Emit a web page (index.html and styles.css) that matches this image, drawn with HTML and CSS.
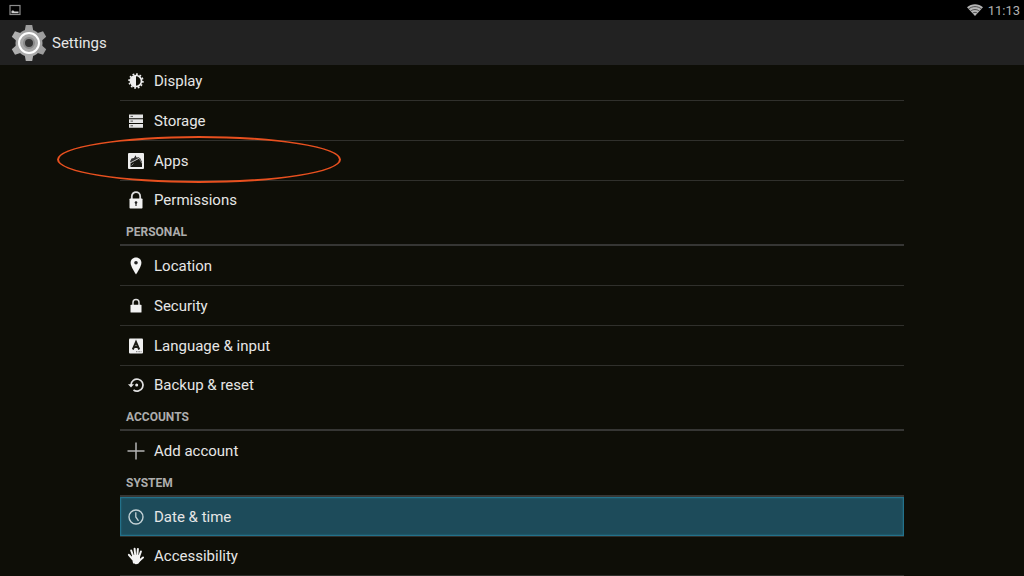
FILE: index.html
```html
<!DOCTYPE html>
<html lang="en">
<head>
    <meta charset="UTF-8">
    <meta name="viewport" content="width=device-width, initial-scale=1.0">
    <title>Settings</title>
    <link rel="stylesheet" href="styles.css">
</head>
<body>
    <div class="status-bar">
        <svg class="status-picture" viewBox="0 0 12 12">
            <rect x="1" y="1.5" width="10" height="9" fill="none" stroke="#8c8c8c" stroke-width="1.2"/>
            <path d="M2.500 9.200V7l1.500-.8 1.500 1.300h4v1.700z" fill="#ccc"/>
        </svg>
        <div class="status-right">
            <svg class="status-wifi" viewBox="0 0 16 12">
                <path d="M0 3.200C4.500-.8 11.500-.8 16 3.200L8 12z" fill="#b5b5b5"/>
                <path d="M1.500 5C5.500 1.800 10.500 1.800 14.500 5M3.500 7.200C6.200 5 9.800 5 12.500 7.200M5.500 9.300C7 8 9 8 10.500 9.300" fill="none" stroke="#222" stroke-width=".7"/>
            </svg>
            <span>11:13</span>
        </div>
    </div>

    <header class="action-bar">
        <svg class="gear" viewBox="0 0 36 36">
            <defs>
                <linearGradient id="gear-fill" x1="0" y1="0" x2="0" y2="36" gradientUnits="userSpaceOnUse">
                    <stop offset="0" stop-color="#9c9c9c"/>
                    <stop offset="1" stop-color="#b0b0b0"/>
                </linearGradient>
            </defs>
            <g fill="url(#gear-fill)">
                <circle cx="18" cy="18" r="13.500"/>
                <path d="M13.500 7l1.300-7h6.400l1.300 7v22l-1.300 7h-6.400l-1.300-7z"/>
                <path d="M13.500 7l1.300-7h6.400l1.300 7v22l-1.300 7h-6.400l-1.300-7z" transform="rotate(60 18 18)"/>
                <path d="M13.500 7l1.300-7h6.400l1.300 7v22l-1.300 7h-6.400l-1.300-7z" transform="rotate(120 18 18)"/>
            </g>
            <circle cx="18" cy="18" r="10" fill="#a8a8a8" stroke="#fff" stroke-width="2"/>
            <circle cx="18" cy="18" r="5" fill="#333" stroke="#8a8a8a" stroke-width="2"/>
        </svg>
        <h1>Settings</h1>
    </header>

    <main>
        <div class="settings">
            <ul>
                <li><a href="#display">
                    <svg viewBox="0 0 16 16">
                        <circle cx="8" cy="8" r="6.900" fill="none" stroke="#eee" stroke-width="1.600" stroke-dasharray="1.800 1.800"/>
                        <circle cx="8" cy="8" r="5.500" fill="none" stroke="#eee" stroke-width="1.700"/>
                        <path d="M8 2.500a5.500 5.500 0 0 0 0 11z" fill="#eee"/>
                    </svg>
                    Display</a></li>
                <li><a href="#storage">
                    <svg viewBox="0 0 16 16">
                        <path d="M1 1.500h14v3.800H1zM1 6.200h14V10H1zM1 10.900h14v3.800H1z" fill="#e4e4e4"/>
                        <path d="M2.500 3.400H5M2.500 8.100H5M2.500 12.800H5" stroke="#555" stroke-width="1"/>
                    </svg>
                    Storage</a></li>
                <li class="marked"><a href="#apps">
                    <svg viewBox="0 0 16 16">
                        <rect width="16" height="16" rx="1" fill="#eee"/>
                        <path d="M2.500 14V9.500L12 5l2 4v5z" fill="#191914"/>
                        <path d="M2 8.500L3.500 5.500 6 5 7.500 2.300l1 2.200 2.500-.3.500 1.300L3.500 9.800z" fill="#333"/>
                        <path d="M2 10l9.500-5" stroke="#ccc" stroke-width=".9"/>
                        <path d="M3.500 12.500l2-2M11.500 6l2.500 4.500" stroke="#aaa" stroke-width=".7"/>
                    </svg>
                    Apps</a></li>
                <li><a href="#permissions">
                    <svg viewBox="0 0 16 16">
                        <path d="M3.800 7V4.500C3.800-1.300 12.200-1.300 12.200 4.500V7" fill="none" stroke="#ddd" stroke-width="1.800"/>
                        <rect x="1.500" y="6.500" width="13" height="10" rx=".8" fill="#f2f2f2"/>
                        <circle cx="8" cy="10.500" r="1.300" fill="#222"/>
                        <path d="M7.400 11h1.200v3H7.400z" fill="#222"/>
                    </svg>
                    Permissions</a></li>
            </ul>

            <h2>PERSONAL</h2>
            <ul>
                <li><a href="#location">
                    <svg viewBox="0 0 16 16">
                        <path d="M8-.5C4.700-.5 2.600 1.800 2.600 4.800 2.600 8.800 8 16.500 8 16.500S13.400 8.800 13.400 4.800C13.400 1.800 11.300-.5 8-.5z" fill="#f4f4f4"/>
                        <circle cx="8" cy="4.700" r="1.800" fill="#222"/>
                    </svg>
                    Location</a></li>
                <li><a href="#security">
                    <svg viewBox="0 0 16 16">
                        <path d="M5 7.500V4.500C5 .6 11 .6 11 4.500v3" fill="none" stroke="#ddd" stroke-width="1.500"/>
                        <rect x="2.500" y="6.800" width="11" height="7.700" rx=".6" fill="#f2f2f2"/>
                    </svg>
                    Security</a></li>
                <li><a href="#language">
                    <svg viewBox="0 0 16 16">
                        <rect x="1" y=".5" width="14" height="15" rx="1" fill="#f0f0f0"/>
                        <path d="M4.800 11.500L8 4l3.200 7.500M6 9h4" fill="none" stroke="#1a1a14" stroke-width="2"/>
                        <path d="M8 13.700h5.500" stroke="#555" stroke-width=".8" stroke-dasharray="1 .6"/>
                    </svg>
                    Language &amp; input</a></li>
                <li><a href="#backup">
                    <svg viewBox="0 0 16 16">
                        <path d="M3 8A6 6 0 1 1 5.500 13" fill="none" stroke="#e0e0e0" stroke-width="1.700"/>
                        <path d="M0 7.200h6L3 10.600z" fill="#e8e8e8"/>
                        <circle cx="8.700" cy="8" r="1.500" fill="#e8e8e8"/>
                    </svg>
                    Backup &amp; reset</a></li>
            </ul>

            <h2>ACCOUNTS</h2>
            <ul>
                <li><a href="#add-account">
                    <svg viewBox="0 0 16 16">
                        <path d="M8-.5v17M-.5 8h17" stroke="#b4b4b4" stroke-width="1.500"/>
                    </svg>
                    Add account</a></li>
            </ul>

            <h2>SYSTEM</h2>
            <ul class="system">
                <li class="selected"><a href="#date-time">
                    <svg viewBox="0 0 16 16">
                        <circle cx="8" cy="8" r="7" fill="none" stroke="#c4d2d6" stroke-width="1.400"/>
                        <path d="M7.800 3.200V8l2.700 3.800" fill="none" stroke="#c4d2d6" stroke-width="1.300"/>
                    </svg>
                    Date &amp; time</a></li>
                <li><a href="#accessibility">
                    <svg viewBox="0 0 16 16">
                        <g stroke="#f4f4f4" stroke-width="2" stroke-linecap="round">
                            <path d="M5.500 9L3.200 2.500M7.300 8L6.600.8M9.300 8L9.900 1M11 9l1.900-5.500M4.500 11L.9 6.800"/>
                            <path d="M11.500 12.500l3.500-3"/>
                        </g>
                        <path d="M3.500 8.500L5 7h7v4.500l1 .5-2.500 3.500c-1.500 1-4.500 1-5.500-.5z" fill="#f4f4f4"/>
                    </svg>
                    Accessibility</a></li>
            </ul>
        </div>
    </main>
</body>
</html>
```
FILE: styles.css
```css
* {
    box-sizing: border-box;
}
body {
    display: flex;
    flex-direction: column;
    height: 100vh;
    margin: 0;
    overflow: hidden;
    background-color: #0e0e07;
    color: #e6e6e6;
    font-family: Roboto, "Liberation Sans", sans-serif;
}
.status-bar {
    display: flex;
    flex-shrink: 0;
    justify-content: space-between;
    align-items: center;
    height: 20px;
    padding: 0 4px 0 9px;
    background-color: #000;
}
.status-picture {
    width: 12px;
    height: 12px;
}
.status-right {
    display: flex;
    align-items: center;
    gap: 5px;
    color: #b0b0b0;
    font-size: 13px;
}
.status-wifi {
    width: 16px;
    height: 12px;
}
.action-bar {
    display: flex;
    flex-shrink: 0;
    align-items: center;
    gap: 5px;
    height: 45px;
    padding: 0 11px;
    background-color: #222;
}
.gear {
    width: 36px;
    height: 36px;
}
h1 {
    margin: 0;
    font-size: 15px;
    font-weight: normal;
}
main {
    flex: 1;
    min-height: 0;
    overflow: hidden;
}
/* the list is scrolled, so its first row starts under the bar */
.settings {
    margin: -4px 120px 0;
}
ul {
    margin: 0;
    padding: 0;
    list-style: none;
}
li {
    position: relative;
    border-bottom: 1px solid #30302c;
}
li:last-child {
    border-bottom: none;
}
.system li:last-child {
    border-bottom: 1px solid #30302c;
}
li a {
    display: flex;
    align-items: center;
    gap: 10px;
    height: 39px;
    padding: 0 8px;
    color: #e6e6e6;
    font-size: 15px;
    text-decoration: none;
}
li + li:last-child a {
    height: 38px;
}
li svg {
    width: 16px;
    height: 16px;
    overflow: visible;
}
h2 {
    height: 27px;
    margin: 0;
    padding: 0 6px;
    border-bottom: 2px solid #363634;
    color: #adadad;
    font-size: 12px;
    font-weight: bold;
    line-height: 27px;
}
.selected a {
    border: 1px solid #23718a;
    padding: 0 7px;
    background-color: #1d4b5a;
    box-shadow: inset 0 0 2px #23718a;
}
.marked::after {
    content: "";
    position: absolute;
    top: -5px;
    left: -63px;
    width: 280px;
    height: 43px;
    border: 2px solid #e8501f;
    border-radius: 50%;
    pointer-events: none;
}
```
